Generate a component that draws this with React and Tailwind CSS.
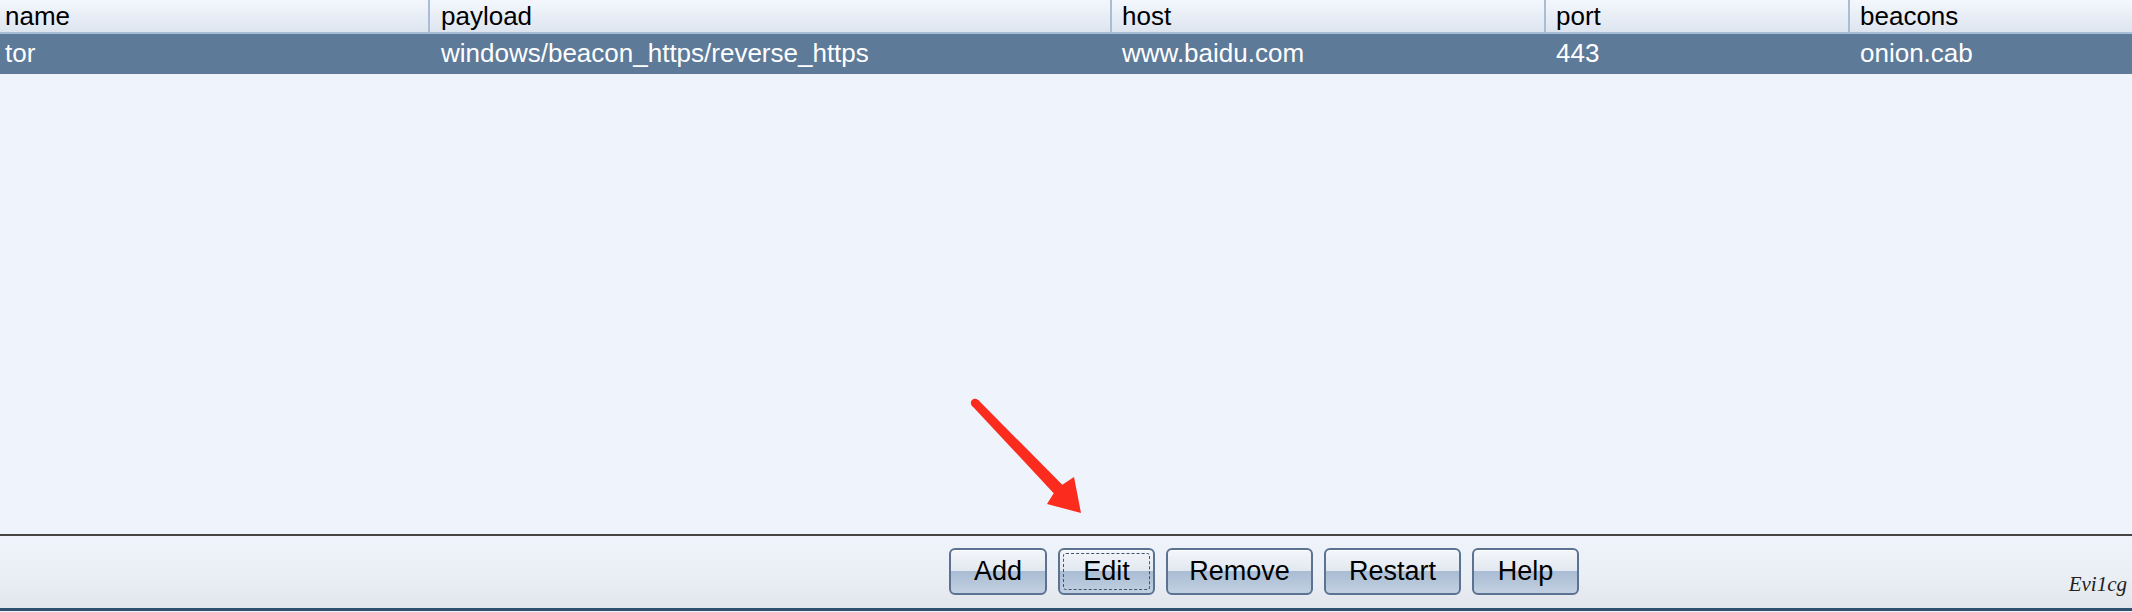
import React from 'react';

const columns = [
  { key: 'name', label: 'name', width: 'w-[428px]', pad: 'pl-[5px]' },
  { key: 'payload', label: 'payload', width: 'w-[682px]', pad: 'pl-[11px]' },
  { key: 'host', label: 'host', width: 'w-[434px]', pad: 'pl-[10px]' },
  { key: 'port', label: 'port', width: 'w-[304px]', pad: 'pl-[10px]' },
  { key: 'beacons', label: 'beacons', width: 'flex-1', pad: 'pl-[10px]' },
];

const listeners = [
  {
    name: 'tor',
    payload: 'windows/beacon_https/reverse_https',
    host: 'www.baidu.com',
    port: '443',
    beacons: 'onion.cab',
  },
];

function ToolButton({ label, width, focused }) {
  return (
    <button
      className={`relative h-[47px] ${width} rounded-[6px] border-2 border-[#5b7390] bg-[linear-gradient(to_bottom,#f3f6fa_0%,#e2e8f0_50%,#aabdd4_50%,#c2d0e1_100%)] text-[27px] text-black shadow-[inset_0_1px_0_#ffffff]`}
    >
      {focused && (
        <span className="absolute inset-[3px] rounded-[3px] border border-dashed border-[#3d5474]" />
      )}
      <span className="relative">{label}</span>
    </button>
  );
}

function ArrowMark() {
  // red annotation arrow pointing at the Edit button
  return (
    <svg
      className="absolute left-[960px] top-[390px]"
      width="130"
      height="130"
      viewBox="0 0 130 130"
    >
      <circle cx="15" cy="13" r="4.2" fill="#fb2b1d" />
      <polygon
        fill="#fb2b1d"
        points="18,9.8 102.3,94.8 114,87 121,123 87,114 93.7,103.2 12,15.8"
      />
    </svg>
  );
}

export default function App() {
  return (
    <div className="relative flex h-[612px] w-full flex-col bg-[#eff3fb] font-['Liberation_Sans',Arial,sans-serif] text-[26px] leading-none">
      {/* table header */}
      <div className="flex h-[34px] border-b-2 border-[#a8bdd6] bg-[linear-gradient(to_bottom,#f4f7fd,#dde5ef)] text-black">
        {columns.map((col, i) => (
          <div
            key={col.key}
            className={`flex h-full items-center ${col.width} ${col.pad} ${i > 0 ? 'border-l-2 border-[#a8bdd6]' : ''}`}
          >
            {col.label}
          </div>
        ))}
      </div>

      {/* rows */}
      {listeners.map((row) => (
        <div key={row.name} className="flex h-[40px] items-center bg-[#5d7a99] pb-[2px] text-white">
          {columns.map((col, i) => (
            <div
              key={col.key}
              className={`${col.width} ${col.pad} ${i > 0 ? 'border-l-2 border-transparent' : ''}`}
            >
              {row[col.key]}
            </div>
          ))}
        </div>
      ))}

      <div className="flex-1" />

      {/* button bar */}
      <div className="flex h-[77px] items-center gap-[11px] border-t-2 border-b-[3px] border-t-[#454545] border-b-[#30506f] bg-[linear-gradient(to_bottom,#eff3fb_0%,#eaeef5_55%,#e2e6ec_100%)] pl-[949px] pb-[2px]">
        <ToolButton label="Add" width="w-[98px]" />
        <ToolButton label="Edit" width="w-[97px]" focused />
        <ToolButton label="Remove" width="w-[147px]" />
        <ToolButton label="Restart" width="w-[137px]" />
        <ToolButton label="Help" width="w-[107px]" />
      </div>
      <div className="h-[1px] bg-[#eff3fb]" />

      <ArrowMark />
      <span className="absolute right-[5px] bottom-[17px] font-['Liberation_Serif',serif] text-[21px] italic text-[#222]">
        Evi1cg
      </span>
    </div>
  );
}
